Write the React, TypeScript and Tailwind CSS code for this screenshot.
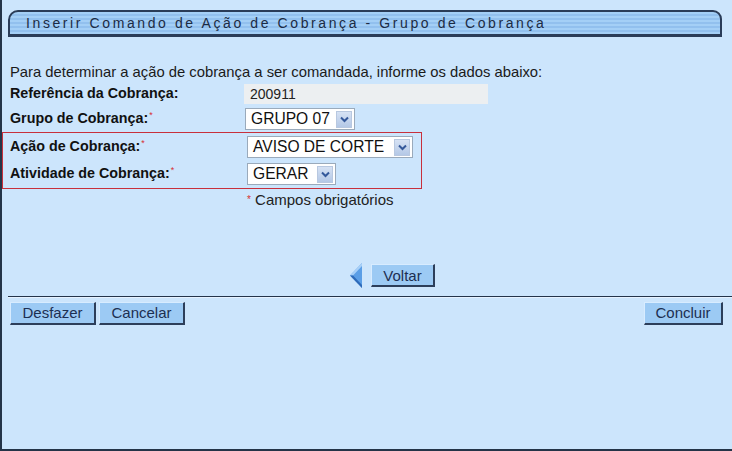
import React from "react";

const Asterisk = () => <span className="text-[#d83030] text-[9px] align-top relative top-[1px] ml-[1px] font-normal">*</span>;

const Select = ({ value, width }: { value: string; width: string }) => (
  <div className={`flex items-center h-[22px] bg-white border border-[#9aaabb] ${width}`}>
    <span className="flex-1 pl-[5px] text-[15.6px] leading-none text-[#111]">{value}</span>
    <span className="w-[16px] h-[17px] mr-[2px] flex items-center justify-center bg-[linear-gradient(#d6e2f4,#b4c8e6)] border border-[#b8c8e0]">
      <svg width="9" height="7" viewBox="0 0 9 7">
        <path d="M1 1.5 L4.5 5 L8 1.5" fill="none" stroke="#34589a" strokeWidth="2" />
      </svg>
    </span>
  </div>
);

const Button = ({ label, width }: { label: string; width: string }) => (
  <button
    type="button"
    className={`h-[23px] ${width} bg-[#9ccaf4] text-[#1c2f52] text-[15px] leading-none border-t border-l border-t-[#d8ecff] border-l-[#d8ecff] border-r-2 border-b-2 border-r-[#2c3e5a] border-b-[#2c3e5a]`}
  >
    {label}
  </button>
);

const App: React.FC = () => {
  return (
    <div className="w-[732px] h-[451px] overflow-hidden bg-[#cce5fc] border-l-2 border-b-2 border-[#243448] font-['Liberation_Sans',Arial,sans-serif] text-[#111]">
      {/* cabeçalho */}
      <div className="pt-[10px] pl-[6px]">
        <div className="w-[714px] h-[27px] flex items-center pl-[16px] rounded-tl-[10px] rounded-tr-[9px] border-2 border-b-[3px] border-[#2a3c58] bg-[repeating-linear-gradient(180deg,#a4cff6_0px,#a4cff6_2px,#92c0ee_2px,#92c0ee_4px)]">
          <span className="text-[14px] tracking-[2.6px] text-[#1b2b44]">Inserir Comando de Ação de Cobrança - Grupo de Cobrança</span>
        </div>
      </div>

      <div className="pl-[8px] mt-[26px] h-[18px] text-[14.8px] leading-[18px] text-[#1a1a1a]">
        Para determinar a ação de cobrança a ser comandada, informe os dados abaixo:
      </div>

      <div className="pl-[8px] mt-[3px] h-[20px] flex items-center">
        <span className="w-[234px] text-[14.3px] font-bold">Referência da Cobrança:</span>
        <span className="w-[244px] h-[20px] pl-[6px] flex items-center bg-[#eceff1] text-[14px] text-[#222]">200911</span>
      </div>

      <div className="pl-[8px] mt-[4px] h-[22px] flex items-center">
        <span className="w-[235px] text-[14.3px] font-bold">
          Grupo de Cobrança:<Asterisk />
        </span>
        <Select value="GRUPO 07" width="w-[110px]" />
      </div>

      <div className="mt-[2px] w-[420px] h-[57px] border border-[#c8303c] pl-[7px] pt-[3px]">
        <div className="h-[22px] flex items-center">
          <span className="w-[237px] text-[14.3px] font-bold">
            Ação de Cobrança:<Asterisk />
          </span>
          <Select value="AVISO DE CORTE" width="w-[166px]" />
        </div>
        <div className="mt-[5px] h-[22px] flex items-center">
          <span className="w-[237px] text-[14.3px] font-bold">
            Atividade de Cobrança:<Asterisk />
          </span>
          <Select value="GERAR" width="w-[89px]" />
        </div>
      </div>

      <div className="pl-[245px] mt-[3px] h-[16px] text-[15px] leading-[16px] text-[#222]">
        <span className="text-[#d83030] text-[10px] align-top">*</span> Campos obrigatórios
      </div>

      <div className="mt-[55px] h-[25px] flex items-center justify-center pl-[50px] gap-[8px]">
        <svg width="14" height="25" viewBox="0 0 14 25">
          <polygon points="13,0 13,25 1,12.5" fill="#5a9ee6" />
          <polygon points="13,0 1,12.5 4,12.5 13,3" fill="#a8d0f8" />
          <polygon points="1,12.5 13,25 13,22 4,12.5" fill="#2e6ab8" />
        </svg>
        <Button label="Voltar" width="w-[64px]" />
      </div>

      <div className="ml-[6px] mt-[8px] h-[2px] bg-[#24344a] border-b border-[#e6f2ff]" />

      <div className="mt-[3px] pl-[8px] pr-[9px] flex items-center">
        <Button label="Desfazer" width="w-[86px]" />
        <div className="ml-[3px]">
          <Button label="Cancelar" width="w-[86px]" />
        </div>
        <div className="ml-auto">
          <Button label="Concluir" width="w-[79px]" />
        </div>
      </div>
    </div>
  );
};

export default App;
